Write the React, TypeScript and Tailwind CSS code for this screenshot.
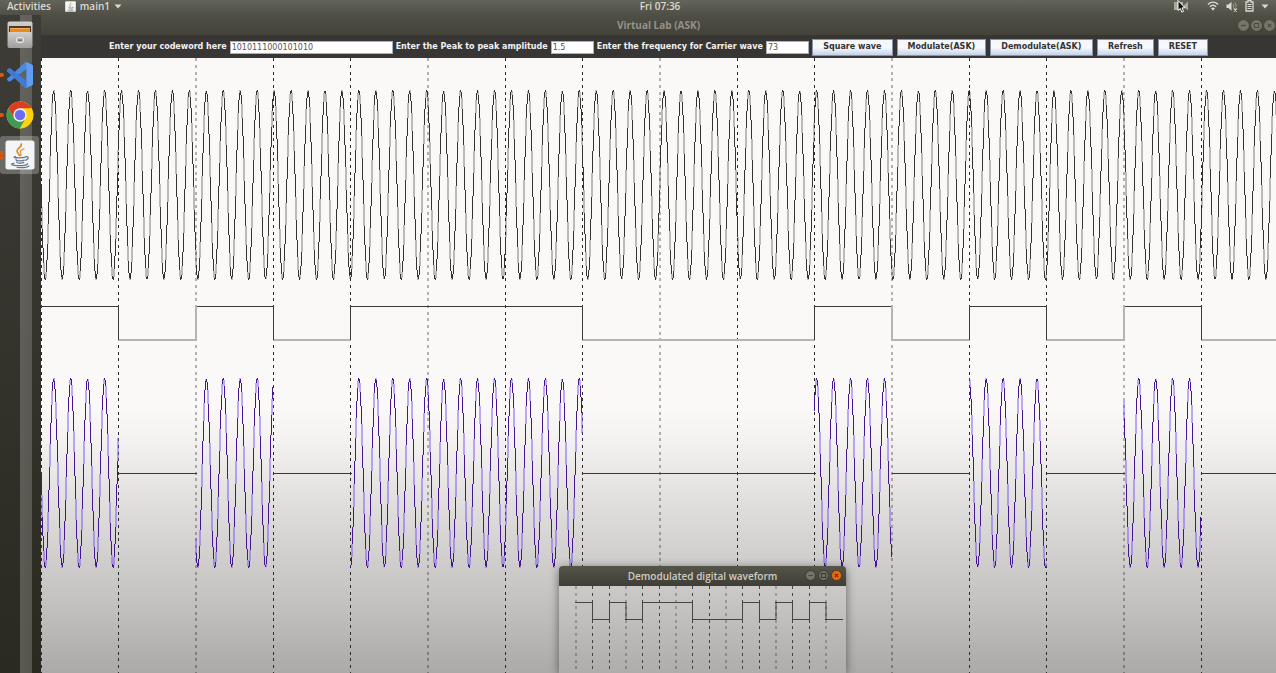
import React from "react";

/* ---------- signal model ---------- */

const CODEWORD = "1010111000101010";
const BITS = CODEWORD.split("").map(Number);

// Columns are computed on a grid 1.5 times finer than the screen; a fine column
// lands either on one screen column or is spread faintly over two.
function column(fine: number) {
  const q = Math.floor(fine / 3);
  const r = fine % 3;
  if (r === 1) return { x: q * 2, w: 2, faint: true };
  return { x: q * 2 + (r === 2 ? 1 : 0), w: 1, faint: false };
}

const PERIOD = 25.43;
const PEAK = 18.6;
const BIT = 116;

function carrier(mid: number, from: number, to: number) {
  const y = (n: number) => mid - 95 * Math.cos(((n - PEAK) / PERIOD) * Math.PI * 2);
  let dark = "";
  let faint = "";
  for (let n = from; n < to; n++) {
    const a = (y(n - 1) + y(n)) / 2;
    const b = (y(n) + y(n + 1)) / 2;
    const top = Math.round(Math.min(a, b, y(n)));
    const bottom = Math.max(top + 1, Math.round(Math.max(a, b, y(n))));
    const c = column(n);
    const d = `M${c.x} ${top}h${c.w}V${bottom}h${-c.w}z`;
    if (c.faint) faint += d;
    else dark += d;
  }
  return { dark, faint };
}

function Carrier({ mid, from, to, dark, faint }: { mid: number; from: number; to: number; dark: string; faint: string }) {
  const p = carrier(mid, from, to);
  return (
    <>
      <path d={p.faint} fill={faint} />
      <path d={p.dark} fill={dark} />
    </>
  );
}

function Grid({ step, start, count, height, ink, pale }: { step: number; start: number; count: number; height: number; ink: string; pale: string }) {
  return (
    <>
      {Array.from({ length: count }, (_, i) => {
        const c = column(start + i * step);
        return (
          <line
            key={i}
            x1={c.x + c.w / 2}
            x2={c.x + c.w / 2}
            y1={0}
            y2={height}
            stroke={c.faint ? pale : ink}
            strokeWidth={c.w}
            strokeDasharray="3 4 3 4 3 3"
          />
        );
      })}
    </>
  );
}

function Square({ step, start, high, low, lowHeight, ink, pale }: { step: number; start: number; high: number; low: number; lowHeight: number; ink: string; pale: string }) {
  return (
    <>
      {BITS.map((bit, i) => {
        const a = column(start + i * step);
        const b = column(start + (i + 1) * step);
        const edge = i > 0 && BITS[i - 1] !== bit;
        const thick = !bit && lowHeight > 1;
        return (
          <g key={i}>
            <rect x={a.x} y={bit ? high : low} width={b.x - a.x + 1} height={thick ? lowHeight : 1} fill={thick ? pale : ink} />
            {edge && <rect x={a.x} y={high} width={a.w} height={low - high + 1} fill={a.faint ? pale : ink} />}
          </g>
        );
      })}
    </>
  );
}

function MainPlot() {
  return (
    <svg className="block h-full w-full" shapeRendering="crispEdges" role="img" aria-label="Carrier, message and modulated waves">
      <Grid step={BIT} start={0} count={16} height={2000} ink="#2b2b2b" pale="#00000048" />
      <Carrier mid={127} from={0} to={BIT * 16} dark="#333333" faint="#00000040" />
      <Square step={BIT} start={0} high={248} low={281} lowHeight={2} ink="#3a3a3a" pale="#b4b4b4" />
      {BITS.map((bit, i) =>
        bit ? (
          <Carrier key={i} mid={415} from={i * BIT} to={(i + 1) * BIT} dark="#45168f" faint="#7a4cf278" />
        ) : (
          <rect key={i} x={column(i * BIT).x + 1} y={415} width={78} height={1} fill="#4b1d92" />
        )
      )}
    </svg>
  );
}

/* ---------- icons ---------- */

function FilesIcon() {
  return (
    <svg viewBox="0 0 26 28" className="h-7 w-[26px]">
      <defs>
        <linearGradient id="cab" x1="0" y1="0" x2="0" y2="1">
          <stop offset="0" stopColor="#d2d0cd" />
          <stop offset="1" stopColor="#a19f9d" />
        </linearGradient>
      </defs>
      <rect x="0.5" y="0.5" width="25" height="26.5" rx="2" fill="url(#cab)" />
      <rect x="2" y="5" width="22" height="7" fill="#4b3a2b" />
      <path d="M3 7h8l1 1h11v4H3z" fill="#ea8a23" />
      <path d="M3 7h20v1H3z" fill="#f6b04f" />
      <rect x="1" y="11" width="24" height="15.5" rx="1.5" fill="url(#cab)" />
      <rect x="9.500" y="16.500" width="7" height="5" rx="1.500" fill="#b5b4b2" stroke="#e6e6e5" />
      <rect x="11" y="18.500" width="4" height="1.500" fill="#777" />
    </svg>
  );
}

function CodeIcon() {
  return (
    <svg viewBox="0 0 24 24" className="size-[26px]">
      <path
        fill="#4a8be0"
        d="M23.15 2.587L18.21.21a1.494 1.494 0 0 0-1.705.29l-9.46 8.63-4.12-3.128a.999.999 0 0 0-1.276.057L.327 7.261A1 1 0 0 0 .326 8.74L3.899 12 .326 15.26a1 1 0 0 0 .001 1.479L1.65 17.94a.999.999 0 0 0 1.276.057l4.12-3.128 9.46 8.63a1.492 1.492 0 0 0 1.704.29l4.942-2.377A1.5 1.5 0 0 0 24 20.06V3.939a1.5 1.5 0 0 0-.85-1.352zm-5.146 14.861L10.826 12l7.178-5.448v10.896z"
      />
      <path d="M18 .2l5.1 2.4a1.500 1.500 0 0 1 .9 1.300v16.200a1.500 1.500 0 0 1-.9 1.300L18 23.800z" fill="#639df2" />
      <path d="M.3 7.300L1.600 6.100a1 1 0 0 1 1.300-.1L18 17.400v6.100a1.500 1.500 0 0 1-1.500 0L.3 8.700a1 1 0 0 1 0-1.400z" fill="#4079d6" />
    </svg>
  );
}

function ChromeIcon() {
  return (
    <svg viewBox="0 0 48 48" className="size-7">
      <circle cx="24" cy="24" r="23" fill="#f9cf0b" />
      <path d="M4.080 12.500A23 23 0 0 0 24 47L34 29.700 14 29.700z" fill="#3f9a55" />
      <path d="M24 47L34 29.700A11.500 11.500 0 0 0 34 18.300L24 13H43.900A23 23 0 0 1 24 47z" fill="#fbd20c" />
      <path d="M24 12.500H43.900A23 23 0 0 0 4.080 12.500L14 29.700z" fill="#dc3c26" />
      <circle cx="24" cy="24" r="11.500" fill="#f2f2f2" />
      <circle cx="24" cy="24" r="9" fill="#6c6cf5" />
    </svg>
  );
}

function JavaIcon({ className }: { className: string }) {
  return (
    <svg viewBox="0 0 30 30" className={className}>
      <rect x="0.500" y="0.500" width="29" height="29" rx="2.500" fill="#f3f5f6" />
      <g fill="none" strokeLinecap="round">
        <path d="M16.300 4c1 2.800-4.600 4.300-4.300 7.200.1 1.600 2 2.600 2.500 4.200" stroke="#dd8a22" strokeWidth="1.700" />
        <path d="M19 8.800c-3 1-4.300 2.300-3.500 3.900.6 1.100 1 1.800 0 3" stroke="#e59a3c" strokeWidth="1.300" />
        <path d="M10.500 16.500c-2.500.5-2 1.400 3.500 1.400 3 0 5-.3 6.500-.8M11 19.500c-.8 1.500 6 1.700 8.300.6M11.800 22c-.7 1.300 4.700 1.500 7 .4M20.500 16.800c3-1 4 1.700.2 3.500" stroke="#66798c" strokeWidth="1.200" />
        <path d="M9 23.300c-4.500.8-2.500 2.400 4.500 2.400 5.500 0 9.500-.8 9-2.200M12 27.500c5 .4 10-.2 12-1.600" stroke="#66798c" strokeWidth="1.200" />
      </g>
    </svg>
  );
}

function Caret() {
  return (
    <svg viewBox="0 0 8 5" className="h-[5px] w-2">
      <path d="M0.500 0.500h7L4 4.500z" fill="#dcd9d0" />
    </svg>
  );
}

function StatusIcons() {
  return (
    <div className="flex h-full items-center justify-end gap-[7px] pr-[7px]">
      <div className="relative mr-3 h-[12px] w-[14px]">
        <svg viewBox="0 0 14 10" className="mt-px h-[10px] w-[14px]">
          <path d="M0 1h9v8H0zM9 5l5-4.500v9z" fill="#a9a89e" />
        </svg>
        <svg viewBox="0 0 9 13" className="absolute top-0 left-[3px] h-[13px] w-[9px]">
          <path d="M1 0.500v10l2.300-2 1.600 3.700 1.700-.8L5 7.900l3-.2z" fill="#111" stroke="#fff" strokeWidth="1" />
        </svg>
      </div>
      <svg viewBox="0 0 12 10" className="h-[10px] w-[12px]">
        <g fill="none" stroke="#dcd9d0" strokeWidth="1.400">
          <path d="M1 3.500c3-3 7-3 10 0M2.900 5.700c2-2 4.200-2 6.200 0" />
        </g>
        <path d="M4 7.300c1.200-1.200 2.800-1.200 4 0L6 9.800z" fill="#dcd9d0" />
      </svg>
      <svg viewBox="0 0 12 11" className="h-[11px] w-[12px]">
        <path d="M0.500 3.500h2l3-2.800v9l-3-2.700h-2z" fill="#dcd9d0" />
        <path d="M7 3c1 1.200 1 3 0 4.200M8.800 1.500c1.500 2 1.500 3.500 1 5" fill="none" stroke="#a5a398" />
        <path d="M7.800 7.500l3 3m0-3l-3 3" stroke="#dcd9d0" strokeWidth="1.200" />
      </svg>
      <svg viewBox="0 0 9 12" className="h-[12px] w-[9px]">
        <path d="M3 0.500h3v1.500h2v9H1V2h2z" fill="none" stroke="#dcd9d0" strokeWidth="1.300" />
        <path d="M2.500 4.500h4M2.500 6.500h4M2.500 8.500h4" stroke="#dcd9d0" />
      </svg>
      <Caret />
    </div>
  );
}

function WindowButton({ kind, label, fill, ring, ink }: { kind: "min" | "max" | "close"; label: string; fill: string; ring: string; ink: string }) {
  return (
    <button type="button" aria-label={label} className="block size-[11px]">
      <svg viewBox="0 0 11 11" className="size-[11px]">
        <circle cx="5.500" cy="5.500" r="5" fill={fill} stroke={ring} strokeWidth="0.800" />
        {kind === "min" && <path d="M3 5.500h5" stroke={ink} strokeWidth="1.200" />}
        {kind === "max" && <rect x="3.300" y="3.500" width="4.400" height="4" fill="none" stroke={ink} />}
        {kind === "close" && <path d="M3.800 3.800l3.400 3.400m0-3.400L3.800 7.200" stroke={ink} strokeWidth="1.100" />}
      </svg>
    </button>
  );
}

/* ---------- form ---------- */

function Field({ id, label, value, width }: { id: string; label: string; value: string; width: string }) {
  return (
    <>
      <label htmlFor={id} className="text-[8px] leading-3 font-bold whitespace-nowrap text-[#f1f1f1]">
        {label}
      </label>
      <input
        id={id}
        defaultValue={value}
        className={`${width} h-[13px] border border-[#a9b0b8] bg-white px-px text-[8px] leading-3 text-[#555] outline-none`}
      />
    </>
  );
}

const ACTIONS = [
  { label: "Square wave", width: "w-[81px]" },
  { label: "Modulate(ASK)", width: "w-[89px]" },
  { label: "Demodulate(ASK)", width: "w-[103px]" },
  { label: "Refresh", width: "w-[57px]" },
  { label: "RESET", width: "w-[50px]" },
];

function Toolbar() {
  return (
    <form className="flex h-[23px] items-center justify-center gap-[3px] bg-[#373635] pt-px font-['DejaVu_Sans',sans-serif]" onSubmit={(e) => e.preventDefault()}>
      <Field id="codeword" label="Enter your codeword here" value={CODEWORD} width="w-[163px]" />
      <Field id="amplitude" label="Enter the Peak to peak amplitude" value="1.5" width="w-[43px]" />
      <Field id="frequency" label="Enter the frequency for Carrier wave" value="73" width="w-[43px]" />
      <div className="flex gap-1">
        {ACTIONS.map((a) => (
          <button
            key={a.label}
            type="button"
            className={`${a.width} h-[17px] border border-[#8795a8] bg-linear-to-b from-[#f4f6fa] via-[#f8f9fc] to-[#c3d3ea] text-[8px] leading-3 font-bold whitespace-nowrap text-[#333]`}
          >
            {a.label}
          </button>
        ))}
      </div>
    </form>
  );
}

/* ---------- windows ---------- */

function DemodulatedWindow() {
  return (
    <section className="absolute bottom-0 left-[518px] w-[287px] overflow-hidden rounded-t-[4px] shadow-[0_2px_10px_rgba(0,0,0,0.5)]">
      <header className="grid h-5 grid-cols-[1fr_auto_1fr] items-center bg-linear-to-b from-[#565549] to-[#3f3e37] pb-px">
        <h2 className="col-start-2 text-[10px] leading-4 font-semibold text-[#cfccc3]">Demodulated digital waveform</h2>
        <div className="flex justify-end gap-[2px] pr-[4px]">
          <WindowButton kind="min" label="Minimize" fill="#74736a" ring="#35342f" ink="#4d4c45" />
          <WindowButton kind="max" label="Maximize" fill="#74736a" ring="#35342f" ink="#33322d" />
          <WindowButton kind="close" label="Close" fill="#ea6a10" ring="#5a3216" ink="#6a2c05" />
        </div>
      </header>
      <div className="h-[87px] bg-linear-to-b from-[#cbcac9] to-[#aeadac]">
        <svg viewBox="0 0 287 87" className="block h-[87px] w-[287px]" shapeRendering="crispEdges" role="img" aria-label="Demodulated bits">
          <g transform="translate(16 0)">
            <Grid step={25} start={1} count={16} height={87} ink="#444444" pale="#00000038" />
            <Square step={25} start={1} high={16} low={33} lowHeight={1} ink="#444444" pale="#00000050" />
          </g>
        </svg>
      </div>
    </section>
  );
}

function Dock() {
  return (
    <aside className="w-[41px] shrink-0 bg-linear-to-b from-[#3d3c37] to-[#2b2a21]">
      <div className="h-full bg-[linear-gradient(to_right,transparent_20px,rgba(160,160,155,0.4)_20px,rgba(160,160,155,0.35)_32px,transparent_32px)]">
        <nav className="flex w-[39px] flex-col">
          <a href="#files" aria-label="Files" className="flex h-10 items-center justify-center">
            <FilesIcon />
          </a>
          <a href="#code" aria-label="Code editor" className="flex h-10 items-center gap-[3px]">
            <i className="h-1 w-[4px] rounded-r-full bg-[#d8560f]" />
            <CodeIcon />
          </a>
          <a href="#browser" aria-label="Browser" className="flex h-10 items-center gap-[2px]">
            <i className="h-1 w-[4px] rounded-r-full bg-[#d8560f]" />
            <ChromeIcon />
          </a>
          <a href="#java" aria-label="Java application" className="mt-px flex h-[38px] items-center gap-px rounded-[3px] bg-white/25">
            <span className="flex flex-col gap-px">
              <i className="size-1 rounded-r-full bg-[#d8560f]" />
              <i className="size-1 rounded-r-full bg-[#d8560f]" />
            </span>
            <JavaIcon className="size-[30px]" />
          </a>
        </nav>
      </div>
    </aside>
  );
}

export default function App() {
  return (
    <div className="flex h-screen flex-col overflow-hidden bg-[#373635] font-['Open_Sans','Noto_Sans',sans-serif]">
      <header className="grid h-[15px] shrink-0 grid-cols-[44px_1fr_auto_1fr] items-center bg-linear-to-b from-[#64655a] to-[#4f4f45] pb-[3px] text-[10px] leading-3 font-semibold text-[#dcd9d0]">
        <div className="col-span-2 flex items-center pl-[7px]">
          <button type="button">Activities</button>
          <button type="button" className="ml-[14px] flex items-center gap-1">
            <JavaIcon className="size-[11px]" />
            <span>main1</span>
            <Caret />
          </button>
        </div>
        <time>Fri 07:36</time>
        <StatusIcons />
      </header>

      <div className="flex min-h-0 flex-1">
        <Dock />
        <main className="relative flex min-w-0 flex-1 flex-col">
          <header className="grid h-5 shrink-0 grid-cols-[1fr_auto_1fr] items-center bg-linear-to-b from-[#4f4f45] to-[#434339]">
            <h1 className="col-start-2 text-[10px] leading-4 font-bold text-[#94928a]">Virtual Lab (ASK)</h1>
            <div className="flex justify-end gap-[2px] pr-px">
              <WindowButton kind="min" label="Minimize window" fill="#77766c" ring="#77766c" ink="#4a4940" />
              <WindowButton kind="max" label="Maximize window" fill="#77766c" ring="#77766c" ink="#4a4940" />
              <WindowButton kind="close" label="Close window" fill="#77766c" ring="#77766c" ink="#4a4940" />
            </div>
          </header>
          <Toolbar />
          <div className="min-h-0 flex-1 bg-[linear-gradient(to_bottom,#faf9f8_0%,#faf9f8_57%,#f3f2f1_62%,#e8e7e6_68%,#d2d1d0_80%,#c2c1c0_89%,#abaaa9_100%)]">
            <MainPlot />
          </div>
          <DemodulatedWindow />
        </main>
      </div>
    </div>
  );
}
